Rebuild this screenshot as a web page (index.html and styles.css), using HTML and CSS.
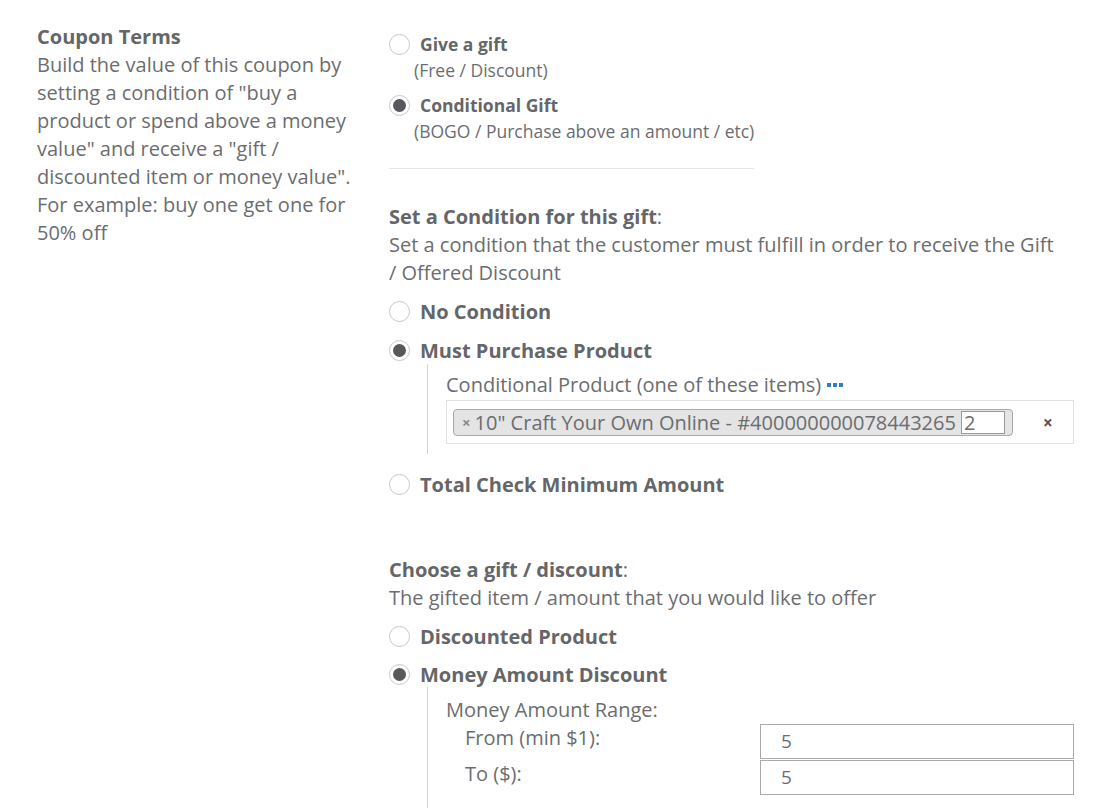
FILE: index.html
```html
<!DOCTYPE html>
<html>
<head>
<meta charset="utf-8">
<link rel="stylesheet" href="styles.css">
</head>
<body>
<div class="page">
  <div class="intro">
    <div class="intro-title">Coupon Terms</div>
    <div class="intro-text">Build the value of this coupon by setting a condition of "buy a product or spend above a money value" and receive a "gift / discounted item or money value". For example: buy one get one for 50% off</div>
  </div>
  <div class="form">
    <div class="type-group">
      <div class="type-option">
        <div class="radio-row"><span class="radio"></span><span class="type-label">Give a gift</span></div>
        <div class="type-sub">(Free / Discount)</div>
      </div>
      <div class="type-option">
        <div class="radio-row"><span class="radio checked"></span><span class="type-label">Conditional Gift</span></div>
        <div class="type-sub">(BOGO / Purchase above an amount / etc)</div>
      </div>
    </div>
    <hr class="divider">

    <div class="section">
      <div class="section-title"><b>Set a Condition for this gift</b>:</div>
      <div class="section-desc">Set a condition that the customer must fulfill in order to receive the Gift / Offered Discount</div>
      <div class="option"><span class="radio"></span><span class="option-label">No Condition</span></div>
      <div class="option"><span class="radio checked"></span><span class="option-label">Must Purchase Product</span></div>
      <div class="nested nested-product">
        <div class="nested-label">Conditional Product (one of these items) <span class="dots"><i></i><i></i><i></i></span></div>
        <div class="select">
          <span class="tag"><span class="tag-x">×</span><span class="tag-text">10" Craft Your Own Online - #400000000078443265</span><span class="tag-qty">2</span></span>
          <span class="select-clear">×</span>
        </div>
      </div>
      <div class="option"><span class="radio"></span><span class="option-label">Total Check Minimum Amount</span></div>
    </div>

    <div class="section section-gift">
      <div class="section-title"><b>Choose a gift / discount</b>:</div>
      <div class="section-desc">The gifted item / amount that you would like to offer</div>
      <div class="option"><span class="radio"></span><span class="option-label">Discounted Product</span></div>
      <div class="option"><span class="radio checked"></span><span class="option-label">Money Amount Discount</span></div>
      <div class="nested nested-money">
        <div class="nested-label">Money Amount Range:</div>
        <div class="range-row"><span class="range-label">From (min $1):</span><span class="field">5</span></div>
        <div class="range-row"><span class="range-label">To ($):</span><span class="field">5</span></div>
      </div>
    </div>
  </div>
</div>
</body>
</html>
```

FILE: styles.css
```css
* { box-sizing: border-box; }
html, body { margin: 0; padding: 0; background: #fff; }
body {
  font-family: "Open Sans", "Liberation Sans", sans-serif;
  color: #6b6d70;
  overflow: hidden;
  height: 808px;
}
.page {
  display: grid;
  grid-template-columns: 322px 685px;
  column-gap: 30px;
  padding: 23px 0 0 37px;
}
.intro-title {
  font-weight: 700;
  font-size: 20px;
  line-height: 28px;
  color: #646669;
}
.intro-text {
  font-size: 20px;
  line-height: 28px;
}
.form { padding-top: 8px; }
.type-option { margin-bottom: 9px; }
.radio-row {
  display: flex;
  align-items: center;
  height: 26px;
}
.radio {
  flex: none;
  width: 21px;
  height: 21px;
  border: 1px solid #c8c8c8;
  border-radius: 50%;
  background: #fff;
  margin-right: 10px;
  position: relative;
}
.radio.checked::after {
  content: "";
  position: absolute;
  left: 3px;
  top: 3px;
  width: 13px;
  height: 13px;
  border-radius: 50%;
  background: #57585b;
}
.type-label {
  font-weight: 700;
  font-size: 17.5px;
  color: #646669;
}
.type-sub {
  font-size: 17.5px;
  line-height: 26px;
  padding-left: 25px;
}
.divider {
  width: 365px;
  margin: 24px 0 0 0;
  border: 0;
  border-top: 1px solid #e6e6e6;
  height: 0;
}
.section { padding-top: 34px; font-size: 20px; }
.section-gift { padding-top: 47px; }
.section-title, .section-desc { line-height: 28px; }
.section-title b { font-weight: 700; color: #646669; }
.section-desc { margin-bottom: 10px; max-width: 668px; }
.option {
  display: flex;
  align-items: center;
  height: 28px;
  margin-bottom: 11px;
}
.section-gift .option { margin-bottom: 10px; }
.option-label { font-weight: 700; color: #646669; }
.nested {
  margin: -11px 0 0 38px;
  border-left: 1px solid #d6d6d6;
  padding-left: 18px;
}
.nested-product { padding-top: 7px; padding-bottom: 10px; margin-bottom: 16px; }
.nested-label { line-height: 28px; }
.dots {
  display: inline-flex;
  gap: 2px;
  vertical-align: middle;
  margin-left: 1px;
  position: relative;
  top: -2px;
}
.dots i {
  display: block;
  width: 4px;
  height: 4px;
  background: #2f7dc4;
}
.select {
  margin-top: 1px;
  height: 44px;
  border: 1px solid #e2e2e2;
  display: flex;
  align-items: center;
  padding-left: 6px;
}
.tag {
  display: flex;
  align-items: center;
  height: 27px;
  width: 560px;
  background: #e4e4e4;
  border: 1px solid #aaaaaa;
  border-radius: 4px;
  padding-left: 6px;
  flex: none;
}
.tag-x { font-size: 15px; font-weight: 700; color: #8a8a8a; margin-left: 2px; margin-right: 4px; }
.tag-text { white-space: nowrap; }
.tag-qty {
  margin-left: 5px;
  width: 44px;
  height: 23px;
  background: #fff;
  border: 1px solid #999;
  line-height: 21px;
  padding-left: 2px;
  flex: none;
}
.select-clear {
  margin-left: 30px;
  font-size: 17px;
  font-weight: 700;
  color: #555;
}
.nested-money { padding-top: 9px; padding-bottom: 30px; }
.range-row {
  display: flex;
  align-items: flex-start;
  height: 36px;
}
.range-label { width: 314px; padding-left: 19px; line-height: 28px; }
.field {
  width: 314px;
  height: 35px;
  border: 1px solid #aaa;
  padding-left: 20px;
  line-height: 33px;
  font-size: 19px;
}
```
